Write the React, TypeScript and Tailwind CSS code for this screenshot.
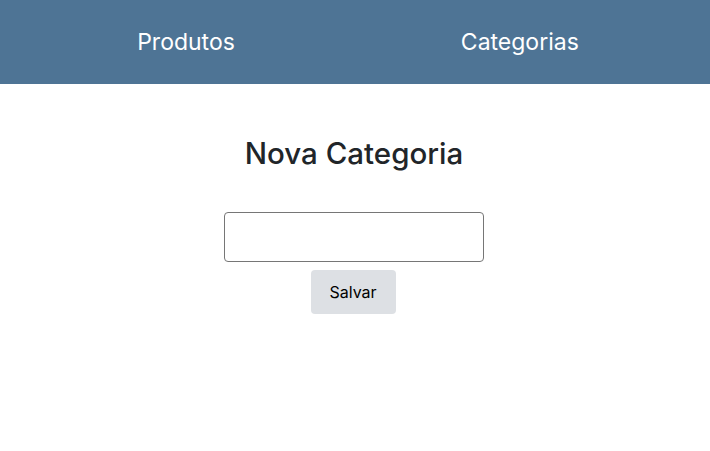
export default function App() {
  return (
    <div className="min-h-screen bg-white font-['Inter',sans-serif]">
      <nav className="h-[84px] bg-[#4e7495] flex items-center justify-center gap-[226px] pl-[6px]">
        <a className="text-white text-[23px]">Produtos</a>
        <a className="text-white text-[23px]">Categorias</a>
      </nav>
      <main className="flex flex-col items-center pr-[2px]">
        <h1 className="mt-[47px] text-[29.5px] leading-[44px] font-medium text-[#212529]">Nova Categoria</h1>
        <input className="mt-[37px] w-[260px] h-[50px] border border-[#767676] rounded-[4px] px-2" />
        <button className="mt-[8px] mr-[2px] w-[85px] h-[44px] bg-[#dde0e4] rounded-[4px] text-[16px] text-black">Salvar</button>
      </main>
    </div>
  );
}
